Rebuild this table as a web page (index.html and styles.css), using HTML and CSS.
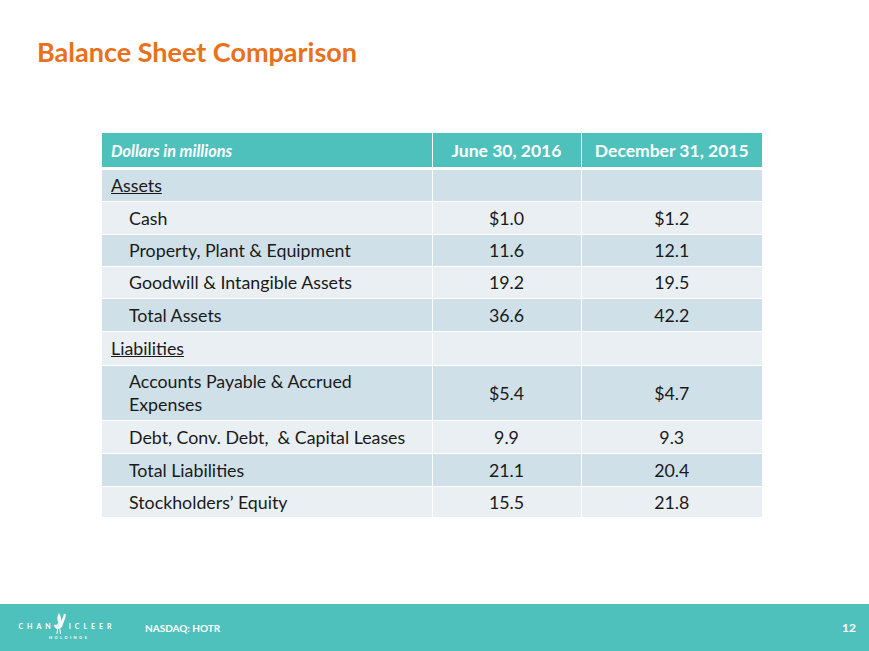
FILE: index.html
```html
<!DOCTYPE html>
<html>
<head>
<meta charset="utf-8">
<link rel="stylesheet" href="styles.css">
</head>
<body>
<div class="slide">
  <h1 class="title">Balance Sheet Comparison</h1>
  <div class="table-wrap">
    <table class="bs">
      <colgroup>
        <col class="c1"><col class="c2"><col class="c3">
      </colgroup>
      <thead>
        <tr>
          <th class="label-h">Dollars in millions</th>
          <th>June 30, 2016</th>
          <th>December 31, 2015</th>
        </tr>
      </thead>
      <tbody>
        <tr class="dark first"><td class="sect"><u>Assets</u></td><td></td><td></td></tr>
        <tr class="light h32"><td class="item">Cash</td><td>$1.0</td><td>$1.2</td></tr>
        <tr class="dark"><td class="item">Property, Plant &amp; Equipment</td><td>11.6</td><td>12.1</td></tr>
        <tr class="light"><td class="item">Goodwill &amp; Intangible Assets</td><td>19.2</td><td>19.5</td></tr>
        <tr class="dark h32"><td class="item">Total Assets</td><td>36.6</td><td>42.2</td></tr>
        <tr class="light h33"><td class="sect"><u>Liabilities</u></td><td></td><td></td></tr>
        <tr class="dark tall"><td class="item">Accounts Payable &amp; Accrued<br>Expenses</td><td>$5.4</td><td>$4.7</td></tr>
        <tr class="light h32"><td class="item">Debt, Conv. Debt,&nbsp; &amp; Capital Leases</td><td>9.9</td><td>9.3</td></tr>
        <tr class="dark h32"><td class="item">Total Liabilities</td><td>21.1</td><td>20.4</td></tr>
        <tr class="light h30"><td class="item">Stockholders’ Equity</td><td>15.5</td><td>21.8</td></tr>
      </tbody>
    </table>
  </div>
  <div class="footer">
    <div class="logo">
      <div class="logo-word">
        <span>CHAN</span>
        <svg class="rooster" width="14" height="24" viewBox="0 0 14 24">
          <path d="M6 1 C7.5 3 8.5 6 8 9 L10 5 L11 1.5 L13 2.5 L12 7 L10 12 C9.5 15.5 7.5 17 5 17 C2.5 17 1 15 1 12.5 C3 13.5 5 12.5 5.3 10 C4 8 3.8 4 6 1 Z" fill="#ffffff" opacity="0.92"/>
          <path d="M4.5 17 L4 22 M7 17 L7.5 22" stroke="#ffffff" stroke-width="1" fill="none"/>
        </svg>
        <span>ICLEER</span>
      </div>
      <div class="logo-sub">HOLDINGS</div>
    </div>
    <div class="nasdaq">NASDAQ: HOTR</div>
    <div class="page">12</div>
  </div>
</div>
</body>
</html>
```

FILE: styles.css
```css
html, body {
  margin: 0;
  padding: 0;
  background: #ffffff;
}
.slide {
  width: 869px;
  height: 651px;
  display: flex;
  flex-direction: column;
  font-family: Lato, "Open Sans", "Liberation Sans", sans-serif;
}
.title {
  margin: 36px 0 0 37px;
  height: 32px;
  font-size: 27px;
  line-height: 32px;
  font-weight: 700;
  color: #E8711A;
}
.table-wrap {
  margin: 65px 0 0 102px;
}
.bs {
  border-collapse: collapse;
  width: 660px;
  table-layout: fixed;
}
.c1 { width: 330px; }
.c2 { width: 149px; }
.c3 { width: 181px; }
.bs th {
  background: #4FC1BC;
  color: #ffffff;
  height: 34px;
  padding: 0;
  font-size: 17.5px;
  font-weight: 700;
  text-align: center;
  border-left: 1px solid #ffffff;
  border-bottom: 3px solid #ffffff;
}
.bs th.label-h {
  text-align: left;
  padding-left: 9px;
  font-style: italic;
  font-size: 16.3px;
  border-left: none;
}
.bs td {
  height: 31px;
  padding: 0;
  font-size: 17.8px;
  color: #1a1a1a;
  text-align: center;
  border-left: 1px solid #ffffff;
  border-top: 1px solid #ffffff;
  line-height: 23px;
}
.bs td:first-child {
  text-align: left;
  border-left: none;
}
.bs td.sect { padding-left: 9px; }
.bs td.item { padding-left: 27px; }
.bs tr.first td { height: 31px; border-top: none; }
.bs tr.h32 td { height: 32px; }
.bs tr.h33 td { height: 33px; }
.bs tr.h30 td { height: 30px; }
.bs tr.tall td { height: 54px; }
.dark td { background: #D0E0E8; }
.light td { background: #E9EFF3; }
.footer {
  margin-top: auto;
  height: 47px;
  background: #4FC1BC;
  display: flex;
  align-items: center;
  color: #ffffff;
}
.logo {
  width: 102px;
  margin-left: 16px;
  display: flex;
  flex-direction: column;
  align-items: center;
}
.logo-word {
  display: flex;
  align-items: center;
  font-size: 7px;
  font-weight: 700;
  letter-spacing: 4px;
  height: 16px;
  margin-top: 2px;
}
.rooster {
  margin: -4px 2px 0 -2px;
}
.logo-sub {
  font-size: 4px;
  font-weight: 700;
  letter-spacing: 2.4px;
  margin-top: 1px;
  margin-left: 4px;
}
.nasdaq {
  margin-left: 27px;
  font-size: 10px;
  font-weight: 700;
}
.page {
  margin-left: auto;
  margin-right: 13px;
  font-size: 12px;
  font-weight: 700;
}
```
